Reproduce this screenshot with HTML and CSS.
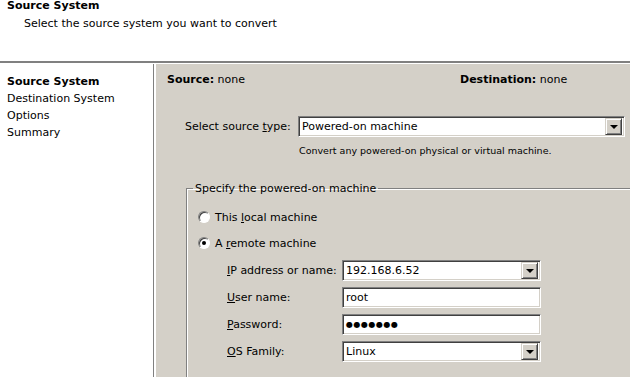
FILE: index.html
```html
<!DOCTYPE html>
<html lang="en">

<head>
    <meta charset="UTF-8" />
    <title>Converter - Source System</title>
    <link rel="stylesheet" href="styles.css">
</head>

<body>
    <div class="window">
        <div class="header">
            <h1>Source System</h1>
            <p class="subtitle">Select the source system you want to convert</p>
        </div>

        <div class="main">
            <ul class="steps">
                <li class="active">Source System</li>
                <li>Destination System</li>
                <li>Options</li>
                <li>Summary</li>
            </ul>

            <div class="panel">
                <div class="summary">
                    <span class="summary-src"><b>Source:</b> none</span>
                    <span><b>Destination:</b> none</span>
                </div>

                <div class="type-row">
                    <label class="type-label">Select source <u>t</u>ype:</label>
                    <div class="combo combo-wide">
                        <span class="combo-value">Powered-on machine</span>
                        <span class="combo-btn"><span class="arrow"></span></span>
                    </div>
                </div>
                <p class="hint">Convert any powered-on physical or virtual machine.</p>

                <fieldset class="group">
                    <legend>Specify the powered-on machine</legend>

                    <div class="radio-row">
                        <span class="radio"></span>
                        <span>This <u>l</u>ocal machine</span>
                    </div>
                    <div class="radio-row">
                        <span class="radio checked"></span>
                        <span>A <u>r</u>emote machine</span>
                    </div>

                    <div class="fields">
                        <div class="field">
                            <label><u>I</u>P address or name:</label>
                            <div class="combo">
                                <span class="combo-value">192.168.6.52</span>
                                <span class="combo-btn"><span class="arrow"></span></span>
                            </div>
                        </div>
                        <div class="field">
                            <label><u>U</u>ser name:</label>
                            <div class="textbox">root</div>
                        </div>
                        <div class="field">
                            <label><u>P</u>assword:</label>
                            <div class="textbox password">&#9679;&#9679;&#9679;&#9679;&#9679;&#9679;&#9679;</div>
                        </div>
                        <div class="field">
                            <label><u>O</u>S Family:</label>
                            <div class="combo">
                                <span class="combo-value">Linux</span>
                                <span class="combo-btn"><span class="arrow"></span></span>
                            </div>
                        </div>
                    </div>
                </fieldset>
            </div>
        </div>
    </div>
</body>

</html>
```

FILE: styles.css
```css
* {
    margin: 0;
    padding: 0;
    box-sizing: border-box;
}

body {
    font-family: 'DejaVu Sans', Tahoma, Verdana, sans-serif;
    font-size: 11px;
    color: #000;
    background: #fff;
    width: 630px;
    height: 377px;
    overflow: hidden;
}

u {
    text-decoration: underline;
    text-underline-offset: 1px;
}

.window {
    display: flex;
    flex-direction: column;
    height: 377px;
}

/* header */

.header {
    height: 64px;
    background: #fff;
    border-bottom: 1px solid #fff;
    box-shadow: inset 0 -2px 0 #808080;
    padding: 0 0 0 7px;
}

h1 {
    font-size: 11px;
    font-weight: bold;
    line-height: 12px;
}

.subtitle {
    margin: 5px 0 0 17px;
    line-height: 13px;
}

/* layout */

.main {
    flex: 1;
    display: flex;
    min-height: 0;
}

.steps {
    list-style: none;
    width: 157px;
    background: #fff;
    border-right: 1px solid #d4d0c8;
    box-shadow: inset -2px 0 0 #fff, inset -3px 0 0 #808080;
    padding: 9px 0 0 7px;
    line-height: 17px;
}

.steps .active {
    font-weight: bold;
}

.panel {
    flex: 1;
    background: #d4d0c8;
    padding: 9px 0 0 10px;
    overflow: hidden;
}

.summary {
    display: flex;
    line-height: 13px;
}

.summary-src {
    width: 293px;
}

/* source type */

.type-row {
    display: flex;
    align-items: center;
    margin-top: 30px;
    padding-left: 18px;
}

.type-label {
    width: 113px;
}

.combo,
.textbox {
    height: 21px;
    background: #fff;
    border-top: 1px solid #808080;
    border-left: 1px solid #808080;
    border-bottom: 1px solid #fff;
    border-right: 1px solid #fff;
    box-shadow: inset 1px 1px 0 #404040, inset -1px -1px 0 #d4d0c8;
    display: flex;
    align-items: center;
    padding-left: 3px;
    width: 199px;
}

.combo-wide {
    width: 327px;
}

.combo-value {
    flex: 1;
}

.combo-btn {
    width: 17px;
    height: 17px;
    margin-right: 2px;
    background: #d4d0c8;
    border-top: 1px solid #d4d0c8;
    border-left: 1px solid #d4d0c8;
    border-right: 1px solid #404040;
    border-bottom: 1px solid #404040;
    box-shadow: inset 1px 1px 0 #fff, inset -1px -1px 0 #808080;
    display: flex;
    align-items: center;
    justify-content: center;
}

.arrow {
    width: 0;
    height: 0;
    border-left: 4px solid transparent;
    border-right: 4px solid transparent;
    border-top: 4px solid #000;
}

.password {
    font-size: 8px;
    letter-spacing: 0.5px;
}

.hint {
    margin: 7px 0 0 132px;
    font-size: 9.5px;
    line-height: 13px;
}

/* group box */

.group {
    margin: 25px -40px 0 19px;
    border: 1px solid #808080;
    box-shadow: inset 1px 1px 0 #fff, 1px 1px 0 #fff;
    padding: 9px 0 40px 11px;
    height: 240px;
}

.group legend {
    margin-left: -5px;
    padding: 0 2px 0 2px;
    line-height: 13px;
}

.radio-row {
    display: flex;
    align-items: center;
    gap: 5px;
    height: 26px;
}

.radio {
    width: 12px;
    height: 12px;
    border-radius: 50%;
    background: #fff;
    border: 1px solid;
    border-color: #808080 #fff #fff #808080;
    box-shadow: inset 1px 1px 0 #404040;
    display: flex;
    align-items: center;
    justify-content: center;
}

.radio.checked::after {
    content: '';
    width: 4px;
    height: 4px;
    border-radius: 50%;
    background: #000;
}

.fields {
    padding: 1px 0 0 29px;
}

.field {
    display: flex;
    align-items: center;
    height: 27px;
}

.field label {
    width: 115px;
}
```
